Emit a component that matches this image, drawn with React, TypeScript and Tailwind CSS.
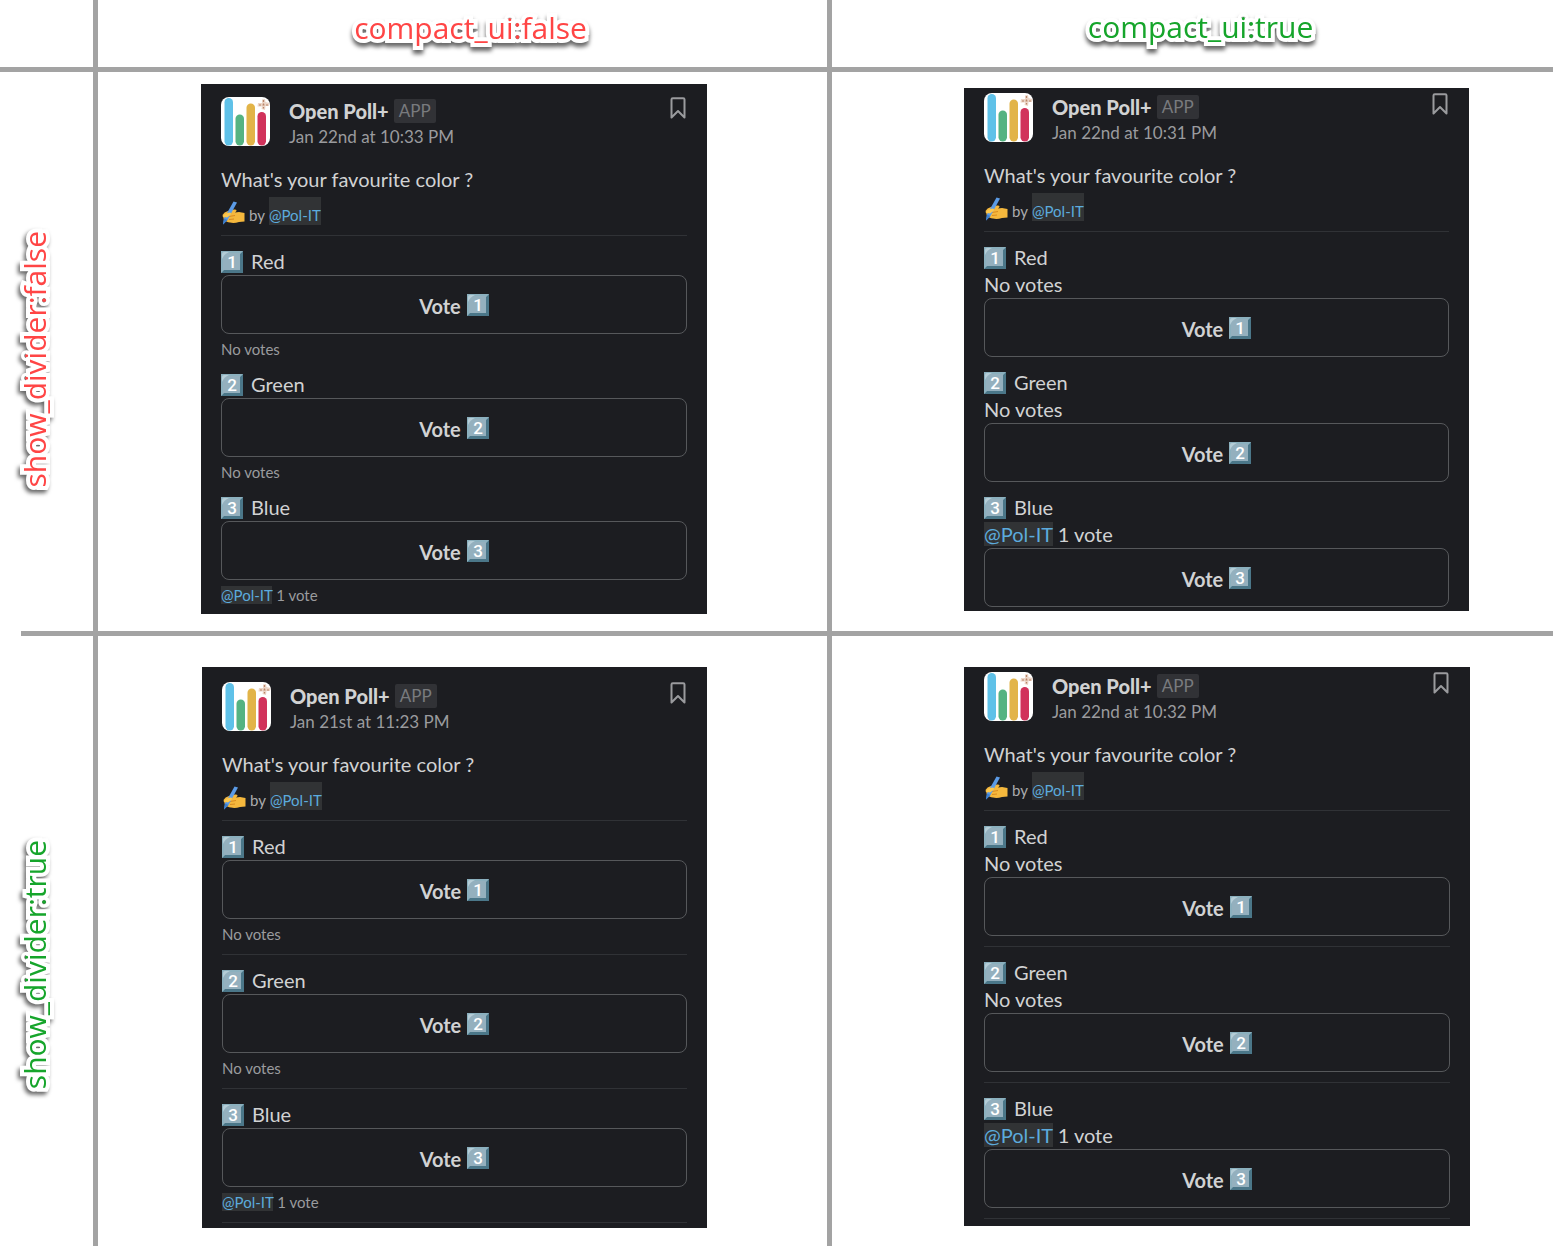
import React from "react";

const LATO = "font-['Lato',sans-serif]";

function Keycap({ digit }: { digit: number }) {
  return (
    <svg viewBox="0 0 22 22" className="h-[22px] w-[22px] shrink-0" role="img" aria-label={`${digit}`}>
      <rect width="22" height="22" rx="1" fill="#82aab9" />
      <path d="M22 0V22H0L3 18.500H18.500V3Z" fill="#4b7789" />
      <path d="M0 0H22L19 3H3V19L0 22Z" fill="#8bb0be" />
      <rect x="2" y="2" width="17" height="17" fill="#94b0be" />
      <path d="M1 8V3Q1 1 3 1H8Q3 3 1 8Z" fill="#b5cdd7" />
      <text x="11" y="16.500" textAnchor="middle" fill="#fff" fontSize="17" fontWeight="500" fontFamily="Roboto, sans-serif">
        {digit}
      </text>
    </svg>
  );
}

function WritingHand() {
  return (
    <svg viewBox="0 0 24 24" className="mt-1 h-6 w-6 shrink-0" aria-hidden="true">
      <path d="M1.500 14Q3 11 7 10L13 8.500Q16 8 15.500 10L14 11.500L18 11L23.500 12V20.500L18 21Q13 22.500 9 21.500Q5 21 4.500 19.500Q2 18.500 2.500 17Z" fill="#f5b83d" />
      <path d="M8 15.500L14 14.500M8 18.500L13 18" stroke="#d98a1f" strokeWidth="1" fill="none" />
      <path d="M12.500 .5L16 1.500L6.500 19L2 23.500L3 17.500Z" fill="#5b9be6" />
      <path d="M3 17.500L6.500 19L2 23.500Z" fill="#3c7fd0" />
      <path d="M1.500 15.500Q4 12 8.500 11.500Q11 12 9.500 14L6 16.500Z" fill="#fcc84f" />
    </svg>
  );
}

function Avatar() {
  return (
    <svg viewBox="0 0 49 49" className="h-[49px] w-[49px] shrink-0" role="img" aria-label="Open Poll+ logo">
      <rect width="49" height="49" rx="8" fill="#fff" />
      <rect x="3.500" y="1" width="8.500" height="47.500" rx="4.200" fill="#5fc1e8" />
      <rect x="14.500" y="17.500" width="8.500" height="31" rx="4.200" fill="#55b382" />
      <rect x="25.500" y="6.500" width="8.500" height="42" rx="4.200" fill="#e2b448" />
      <rect x="36.500" y="15" width="8.500" height="33.500" rx="4.200" fill="#d1325b" />
      <path d="M41 2.500L44 2L44.500 5L48.500 6L48 9L44.500 9L44 13L40.500 12L41 9.500L36.500 9.500L37 6L41 6Z" fill="#ecd6c8" />
      <path d="M42.500 3V11.500M38 8H47.500" stroke="#b98468" strokeWidth="1.200" strokeDasharray="2 1.500" />
    </svg>
  );
}

function Bookmark() {
  return (
    <svg viewBox="0 0 16 22" className="mr-[1px] h-[22px] w-4" fill="none" stroke="#9a9b9e" strokeWidth="2" strokeLinejoin="round" aria-hidden="true">
      <path d="M1.500 2.500Q1.500 1.200 2.800 1.200H13.200Q14.500 1.200 14.500 2.500V20.500L8 14L1.500 20.500Z" />
    </svg>
  );
}

function Mention({ tall = false }: { tall?: boolean }) {
  return (
    <a href="#pol-it" className={tall ? "inline-block bg-[#313335] pt-2 leading-5 text-[#5cabdd]" : "bg-[#313335] text-[#5cabdd]"}>
      @Pol-IT
    </a>
  );
}

const Divider = () => <hr className="mt-[10px] mb-3 border-t border-[#303236]" />;

type CardProps = { date: string; compact: boolean; divider: boolean; pad: string };

const options = [
  { name: "Red", voted: false },
  { name: "Green", voted: false },
  { name: "Blue", voted: true },
];

function PollCard({ date, compact, divider, pad }: CardProps) {
  return (
    <article className={`${LATO} overflow-hidden bg-[#1c1d21] px-5 text-xl leading-[27px] text-[#d1d2d3] ${pad}`}>
      <header className="flex h-[49px] items-start gap-[19px]">
        <Avatar />
        <div className="flex-1 pt-[2px]">
          <h2 className="flex items-center gap-[5px] leading-6">
            <span className="font-black">Open Poll+</span>
            <span className="rounded-xs bg-[#313236] px-[5px] text-[17px] leading-6 text-[#797b7e]">APP</span>
          </h2>
          <p className="mt-[1px] text-[17px] leading-[26px] text-[#9a9b9e]">{date}</p>
        </div>
        <button type="button" aria-label="Save for later"><Bookmark /></button>
      </header>
      <p className="mt-5">What's your favourite color ?</p>
      <p className="mt-1 flex h-7 items-center gap-1 text-[15px] text-[#ababad]">
        <WritingHand />
        <span className="pt-2 leading-5">by</span>
        <Mention tall />
      </p>
      <Divider />
      {options.map((option, i) => {
        const result = option.voted ? (<><Mention /> 1 vote</>) : "No votes";
        return (
          <section key={option.name} className={divider ? "last:[&>hr]:mb-[5px]" : "mb-3 last:mb-0"}>
            <h3 className="flex items-center gap-2">
              <Keycap digit={i + 1} />
              {option.name}
            </h3>
            {compact && <p>{result}</p>}
            <button type="button" className="flex h-[59px] w-full items-center justify-center gap-[6px] rounded-lg border border-[#56585b] font-bold">
              <span className="pt-1">Vote</span>
              <Keycap digit={i + 1} />
            </button>
            {!compact && <p className="pt-[5px] text-[15px] leading-5 text-[#9a9b9e]">{result}</p>}
            {divider && <Divider />}
          </section>
        );
      })}
    </article>
  );
}

const OUTLINE =
  "font-['Open_Sans',sans-serif] text-[30px] leading-9 [paint-order:stroke_fill] [-webkit-text-stroke:8px_white]";

function Label({ text, on, vertical = false }: { text: string; on: boolean; vertical?: boolean }) {
  return (
    <span
      className={`${OUTLINE} ${on ? "text-[#16a52b]" : "text-[#ff4545]"} ${
        vertical
          ? "rotate-180 [filter:drop-shadow(2px_-3px_2px_rgba(0,0,0,0.6))] [writing-mode:vertical-rl]"
          : "[filter:drop-shadow(0_4px_2px_rgba(0,0,0,0.6))]"
      }`}
    >
      {text}
    </span>
  );
}

export default function App() {
  return (
    <main className="flex min-h-screen flex-col bg-white">
      <div className="grid grid-cols-[93px_734fr_726fr] border-b-[5px] border-[#a3a3a3]">
        <div />
        <div className="flex h-[67px] justify-center border-l-[5px] border-[#a3a3a3] pt-[10px] pl-4"><Label text="compact_ui:false" on={false} /></div>
        <div className="flex h-[67px] justify-center border-l-[5px] border-[#a3a3a3] pt-[9px] pl-4"><Label text="compact_ui:true" on /></div>
      </div>
      <div className="grid grid-cols-[93px_734fr_726fr]">
        <div className="flex items-center justify-center pt-4 pr-6"><Label text="show_divider:false" on={false} vertical /></div>
        <div className="border-l-[5px] border-[#a3a3a3] pt-3 pr-[120px] pb-[17px] pl-[103px]">
          <PollCard date="Jan 22nd at 10:33 PM" compact={false} divider={false} pad="pt-[13px] pb-[9px]" />
        </div>
        <div className="border-l-[5px] border-[#a3a3a3] pt-4 pr-[84px] pb-5 pl-[132px]">
          <PollCard date="Jan 22nd at 10:31 PM" compact divider={false} pad="pt-[5px] pb-1" />
        </div>
      </div>
      <hr className="ml-[21px] border-t-[5px] border-[#a3a3a3]" />
      <div className="grid grow grid-cols-[93px_734fr_726fr]">
        <div className="flex items-center justify-center pt-12 pr-6"><Label text="show_divider:true" on vertical /></div>
        <div className="border-l-[5px] border-[#a3a3a3] pt-[31px] pr-[120px] pb-[18px] pl-[104px]">
          <PollCard date="Jan 21st at 11:23 PM" compact={false} divider pad="pt-[15px]" />
        </div>
        <div className="border-l-[5px] border-[#a3a3a3] pt-[31px] pr-[83px] pb-[18px] pl-[132px]">
          <PollCard date="Jan 22nd at 10:32 PM" compact divider pad="pt-[5px] pb-[2px]" />
        </div>
      </div>
    </main>
  );
}
